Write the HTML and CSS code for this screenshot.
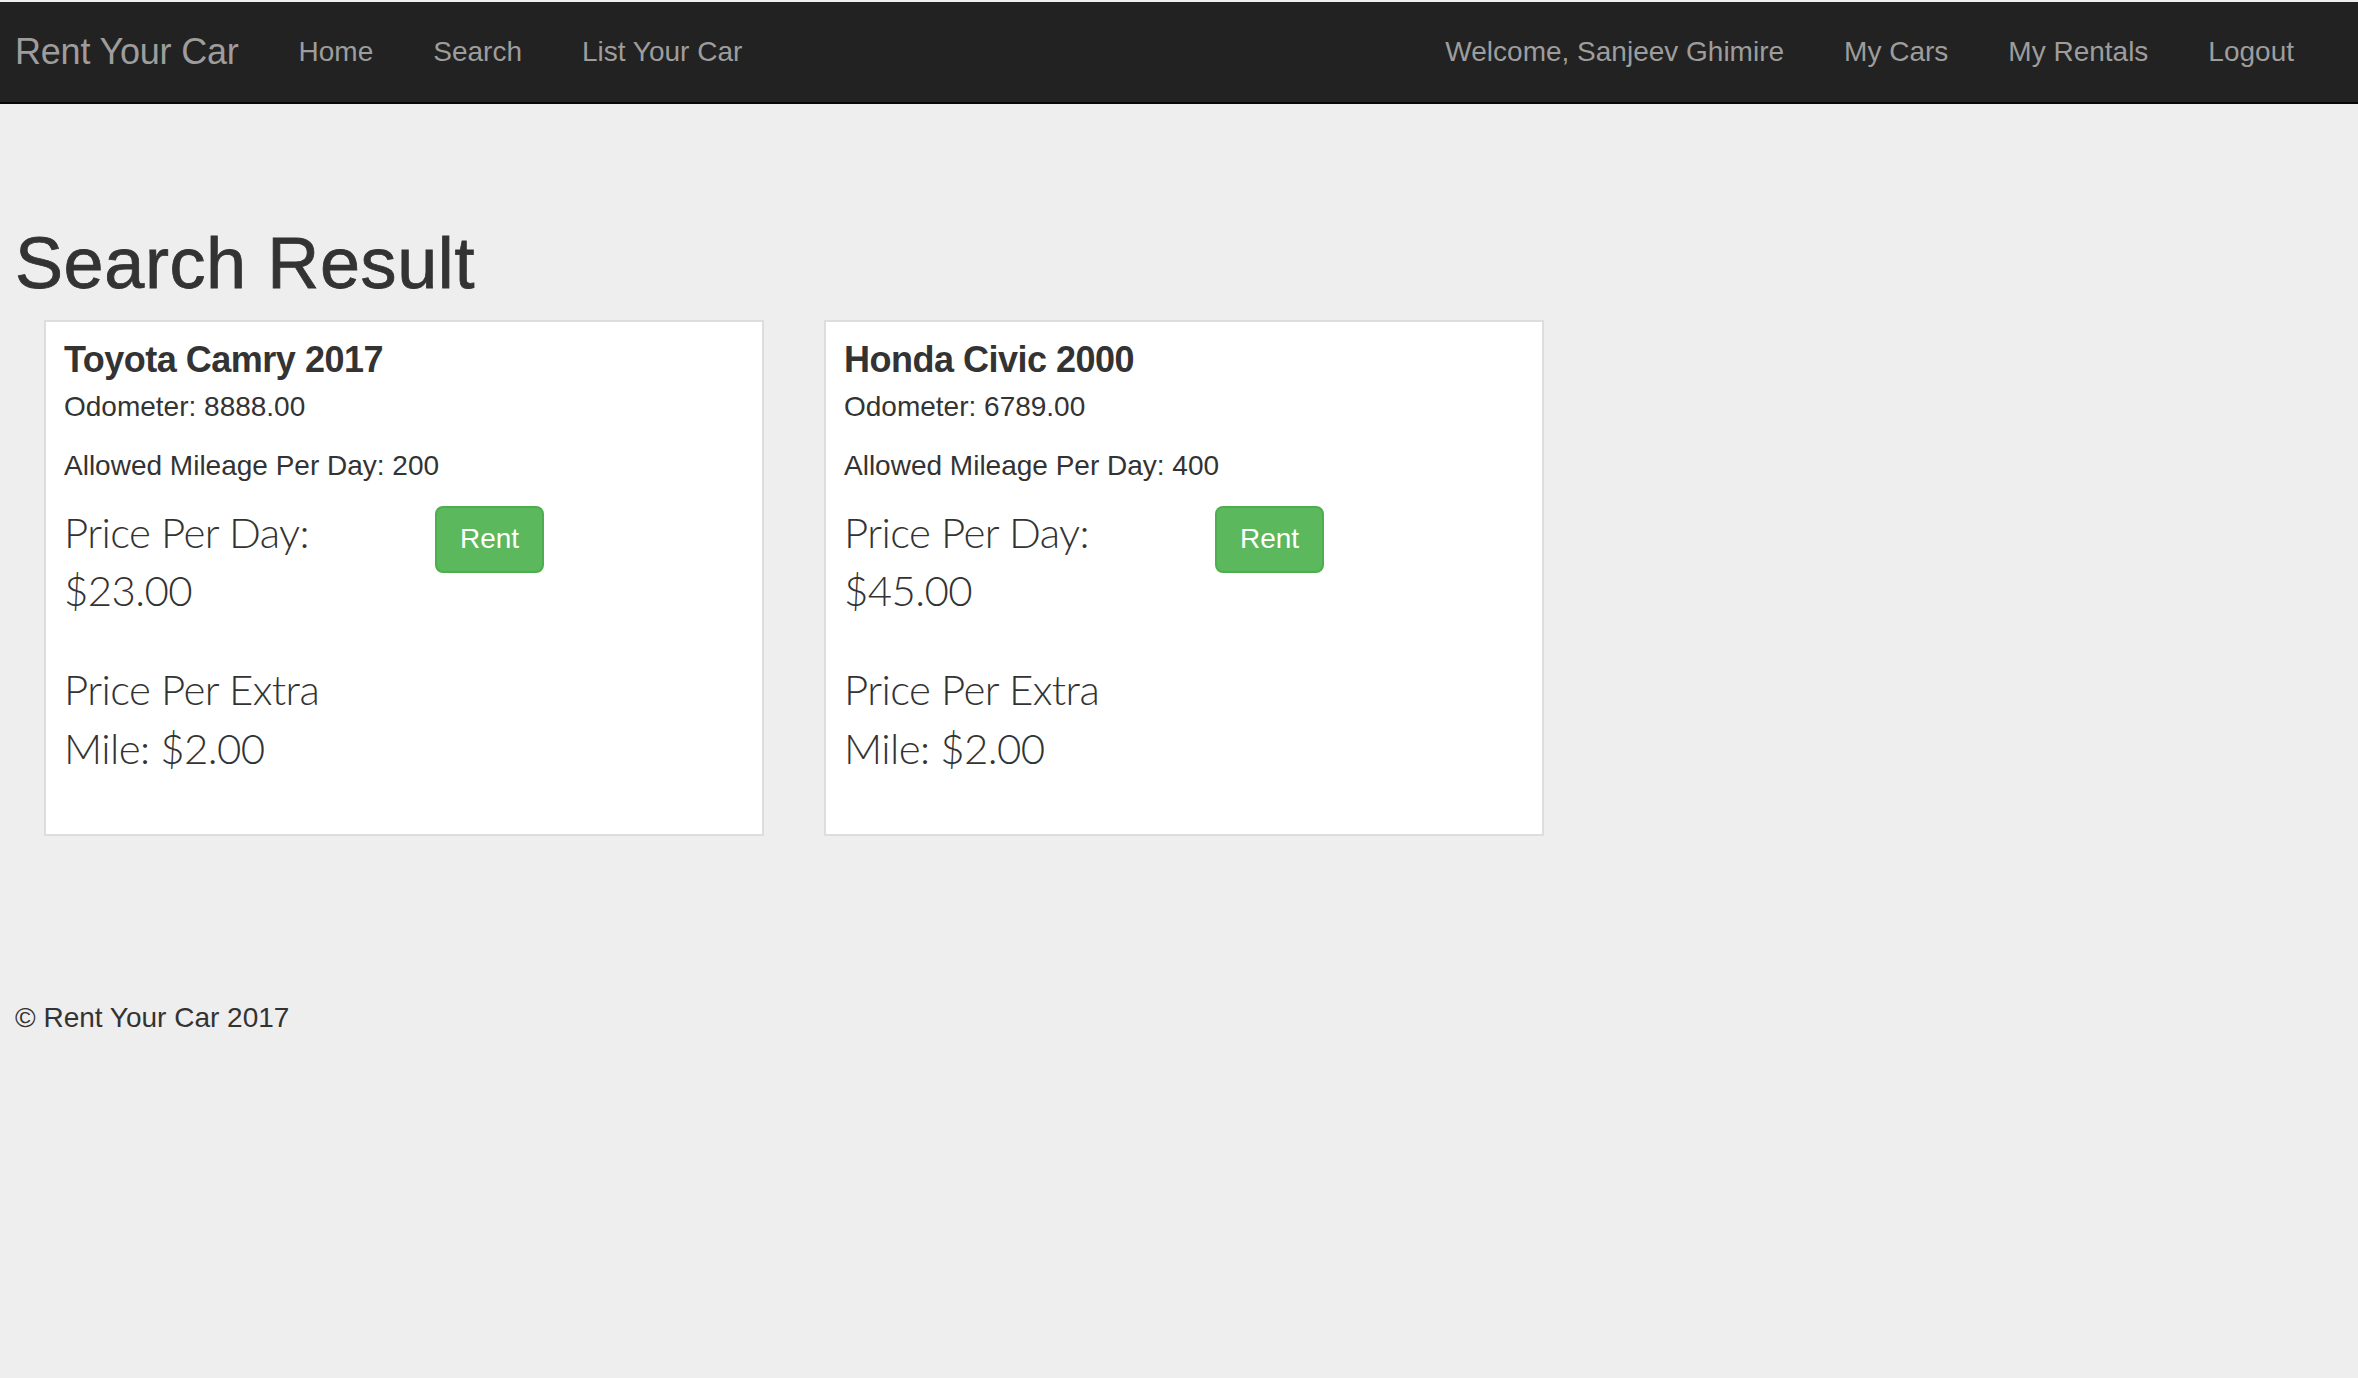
FILE: index.html
```html
<!DOCTYPE html>
<html lang="en">
<head>
<meta charset="utf-8">
<title>Rent Your Car - Search Result</title>
<link rel="stylesheet" href="styles.css">
</head>
<body>
<nav class="navbar">
  <a class="brand" href="#">Rent Your Car</a>
  <ul class="nav">
    <li><a href="#">Home</a></li>
    <li><a href="#">Search</a></li>
    <li><a href="#">List Your Car</a></li>
  </ul>
  <ul class="nav nav-right">
    <li><a href="#">Welcome, Sanjeev Ghimire</a></li>
    <li><a href="#">My Cars</a></li>
    <li><a href="#">My Rentals</a></li>
    <li><a href="#">Logout</a></li>
  </ul>
</nav>
<main class="main">
  <h1 class="page-title">Search Result</h1>
  <div class="results">
    <div class="card">
      <h4 class="car-title">Toyota Camry 2017</h4>
      <p class="odometer">Odometer: 8888.00</p>
      <p class="mileage">Allowed Mileage Per Day: 200</p>
      <div class="price-row">
        <div class="prices">
          <p class="lead">Price Per Day: $23.00</p>
          <p class="lead">Price Per Extra Mile: $2.00</p>
        </div>
        <div class="actions">
          <button class="btn-rent" type="button">Rent</button>
        </div>
      </div>
    </div>
    <div class="card">
      <h4 class="car-title">Honda Civic 2000</h4>
      <p class="odometer">Odometer: 6789.00</p>
      <p class="mileage">Allowed Mileage Per Day: 400</p>
      <div class="price-row">
        <div class="prices">
          <p class="lead">Price Per Day: $45.00</p>
          <p class="lead">Price Per Extra Mile: $2.00</p>
        </div>
        <div class="actions">
          <button class="btn-rent" type="button">Rent</button>
        </div>
      </div>
    </div>
  </div>
  <footer class="footer">
    <p>&copy; Rent Your Car 2017</p>
  </footer>
</main>
</body>
</html>
```

FILE: styles.css
```css
html, body {
  margin: 0;
  padding: 0;
}

body {
  padding-top: 2px;
  background: #eeeeee;
  color: #333333;
  font-family: "Liberation Sans", Helvetica, Arial, sans-serif;
  font-size: 28px;
  line-height: 40px;
}

a {
  text-decoration: none;
}

/* Navbar */
.navbar {
  display: flex;
  align-items: center;
  height: 100px;
  background: #222222;
  border-bottom: 2px solid #080808;
  padding: 0 34px 0 15px;
}

.brand {
  color: #9d9d9d;
  font-size: 36px;
  line-height: 40px;
  padding-right: 30px;
  letter-spacing: -0.2px;
}

.nav {
  display: flex;
  list-style: none;
  margin: 0;
  padding: 0;
}

.nav a {
  display: block;
  padding: 0 30px;
  color: #9d9d9d;
  font-size: 28px;
  line-height: 40px;
}

.nav-right {
  margin-left: auto;
}

/* Main */
.main {
  padding: 0 15px;
}

.page-title {
  margin: 120px 0 17px;
  font-size: 72px;
  line-height: 79px;
  font-weight: 500;
  letter-spacing: 0.6px;
  color: #333333;
  -webkit-text-stroke: 0.8px #333333;
}

.results {
  display: flex;
  gap: 60px;
  padding-left: 29px;
}

.card {
  box-sizing: border-box;
  width: 720px;
  background: #ffffff;
  border: 2px solid #dddddd;
  padding: 18px 18px 13px;
}

.car-title {
  margin: 0 0 7px;
  font-size: 36px;
  line-height: 39.6px;
  font-weight: 700;
  letter-spacing: -0.5px;
  color: #333333;
}

.odometer {
  margin: 0 0 19px;
  color: #333333;
}

.mileage {
  margin: 0 0 20px;
  color: #333333;
}

.price-row {
  display: grid;
  grid-template-columns: 300px auto;
  column-gap: 71px;
  align-items: start;
}

.prices {
  margin-top: -3px;
  margin-bottom: 3px;
}

.lead {
  margin: 0 0 40px;
  font-family: Lato, "Liberation Sans", Helvetica, Arial, sans-serif;
  font-size: 42px;
  line-height: 58.8px;
  font-weight: 300;
  letter-spacing: -0.6px;
  color: #333333;
}

.actions {
  display: flex;
}

.btn-rent {
  box-sizing: border-box;
  height: 67px;
  padding: 0 23px;
  background: #5cb85c;
  border: 2px solid #4cae4c;
  border-radius: 8px;
  color: #ffffff;
  font-family: "Liberation Sans", Helvetica, Arial, sans-serif;
  font-size: 28px;
  line-height: 40px;
  cursor: pointer;
}

.footer {
  margin-top: 162px;
}

.footer p {
  margin: 0;
  color: #333333;
}
```
